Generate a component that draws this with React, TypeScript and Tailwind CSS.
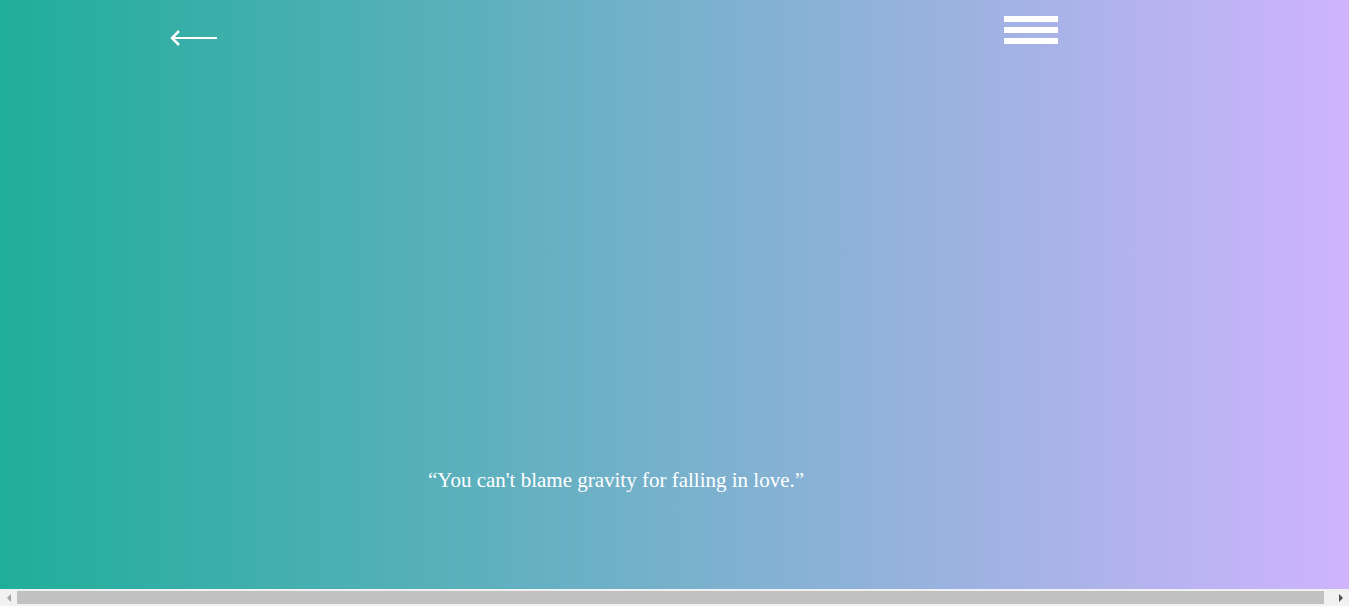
const App = () => {
  return (
    <div className="w-[1349px] h-[606px] flex flex-col overflow-hidden">
      <div className="w-[1357px] h-[589px] shrink-0 bg-[linear-gradient(to_right,#1fae9a,#d0b4fe)] flex flex-col font-['Liberation_Serif',serif] text-white">
        <header className="flex items-start justify-between pl-[170px] pr-[299px] pt-4">
          <button className="mt-[14px] cursor-pointer" aria-label="Back">
            <svg width="48" height="16" viewBox="0 0 48 16" fill="none">
              <path d="M2 8H47" stroke="white" strokeWidth="2" />
              <path d="M9 1L2 8L9 15" stroke="white" strokeWidth="2.5" strokeLinejoin="miter" />
            </svg>
          </button>
          <button className="flex flex-col gap-[5px] cursor-pointer" aria-label="Menu">
            <span className="block w-[54px] h-[6px] bg-white" />
            <span className="block w-[54px] h-[6px] bg-white" />
            <span className="block w-[54px] h-[6px] bg-white" />
          </button>
        </header>

        <main className="flex-1 flex items-end pb-[98px] pl-[428px]">
          <p className="text-[21px] leading-none">“You can't blame gravity for falling in love.”</p>
        </main>
      </div>

      {/* horizontal scrollbar strip */}
      <div className="h-[17px] w-[1349px] bg-[#f1f1f1] flex items-center">
        <div className="w-[17px] h-[17px] flex items-center justify-center">
          <span className="w-0 h-0 border-y-[4px] border-y-transparent border-r-[4px] border-r-[#a3a3a3]" />
        </div>
        <div className="flex-1 h-[13px] pr-[8px]">
          <div className="h-full bg-[#c1c1c1]" />
        </div>
        <div className="w-[17px] h-[17px] flex items-center justify-center">
          <span className="w-0 h-0 border-y-[4px] border-y-transparent border-l-[4px] border-l-[#505050]" />
        </div>
      </div>
    </div>
  );
};

export default App;
